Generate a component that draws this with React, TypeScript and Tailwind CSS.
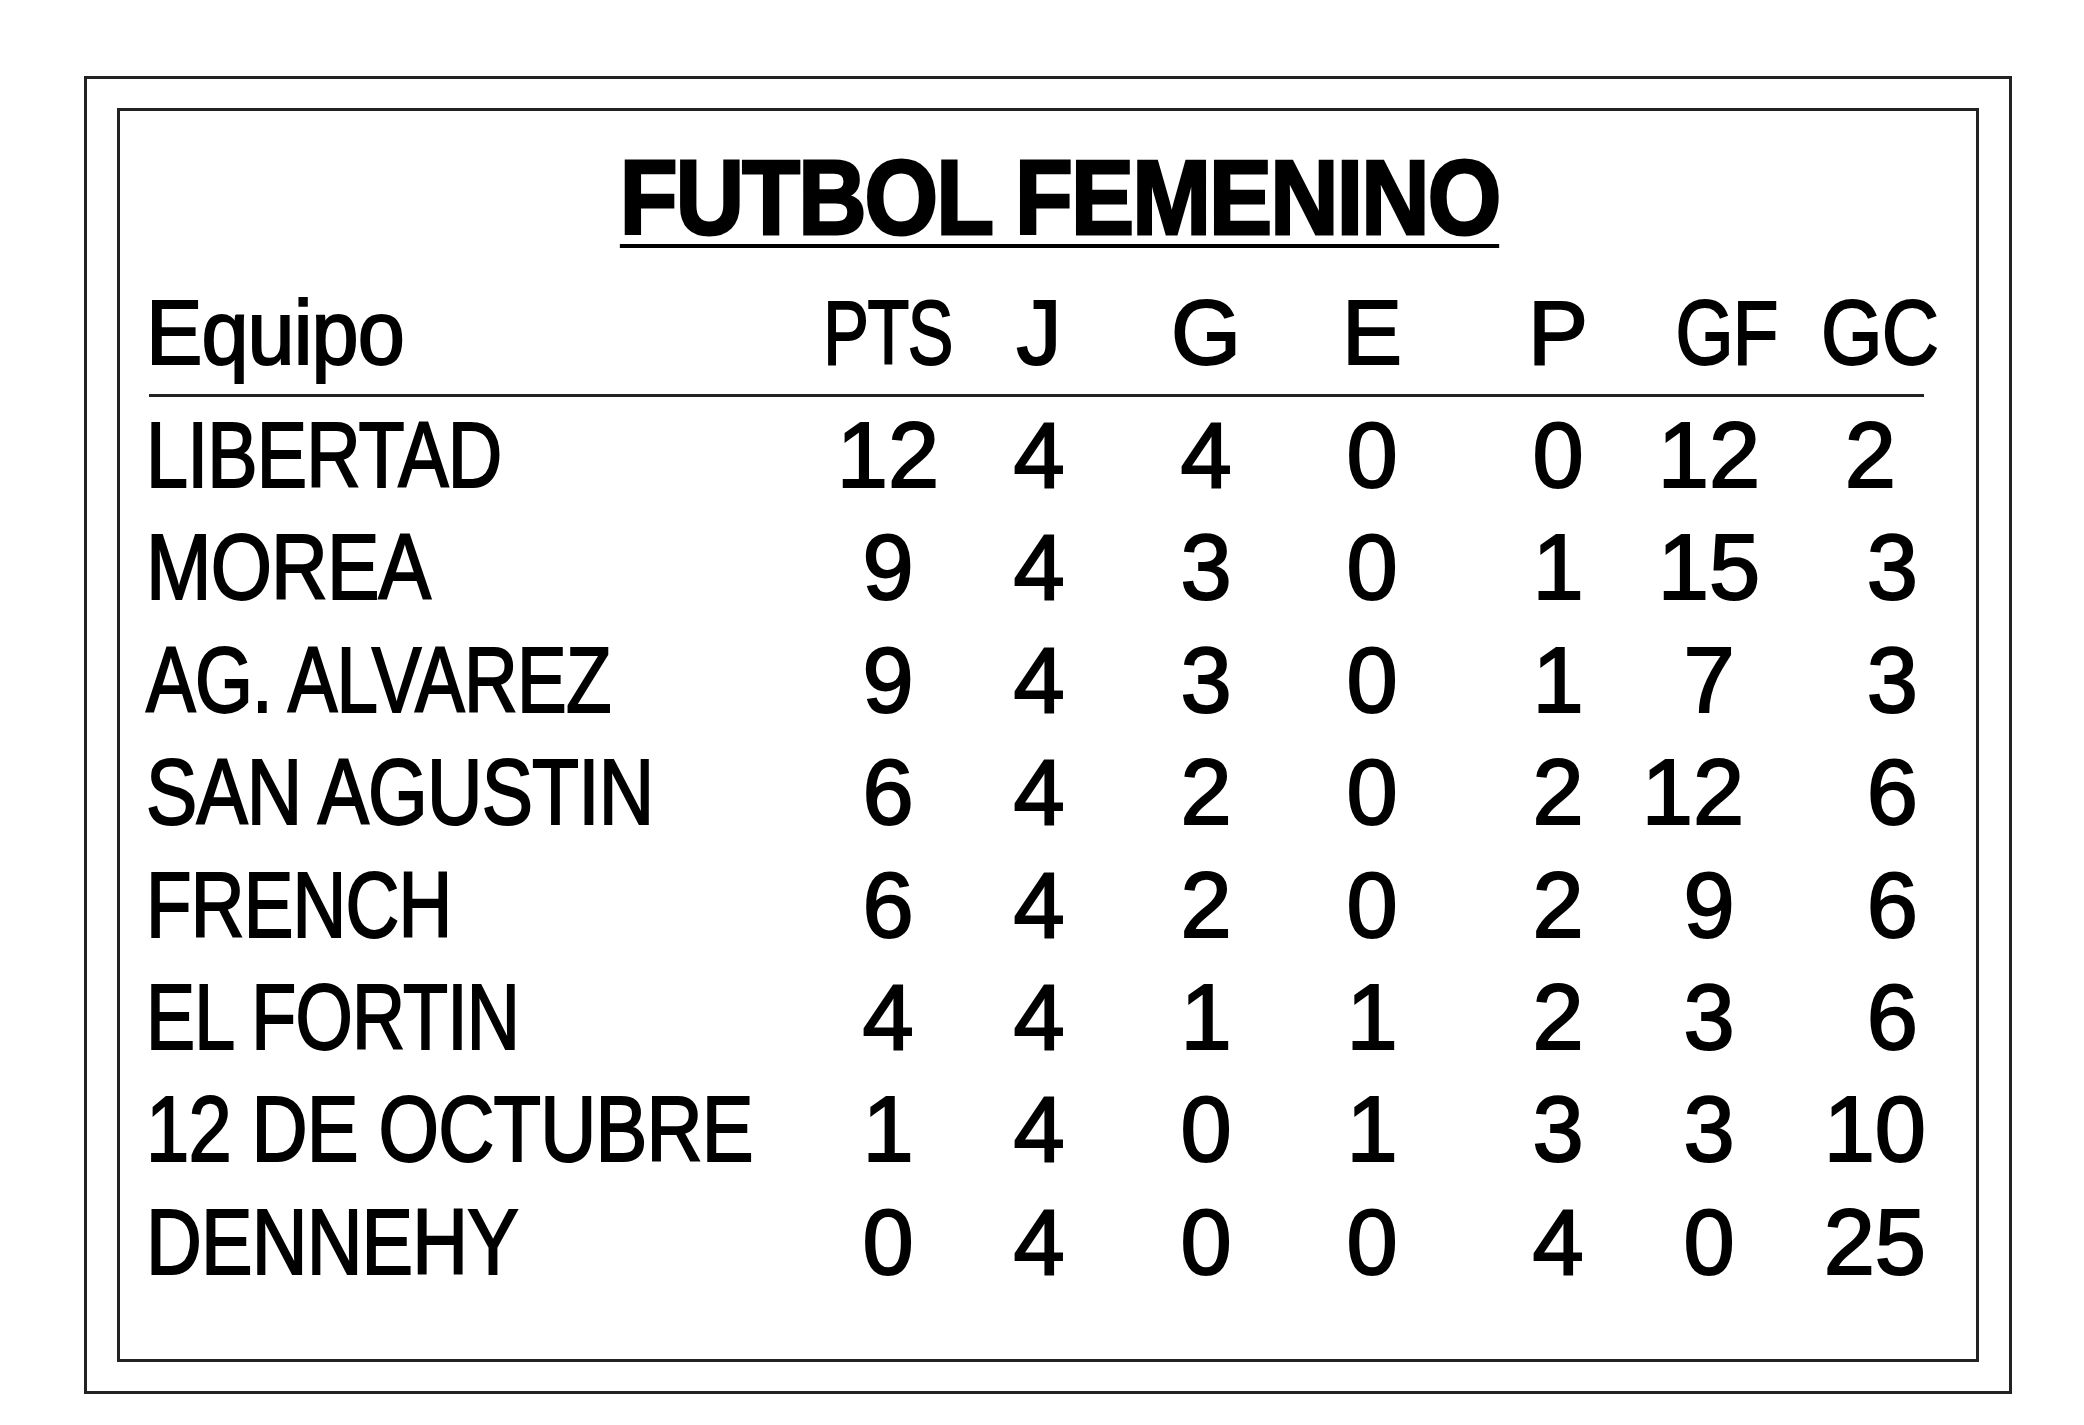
import React from "react";

type Row = {
  name: string;
  sc: string;
  v: string[];
  gfCls?: string;
  gcCls?: string;
};

const rows: Row[] = [
  { name: "LIBERTAD", sc: "scale-x-[0.82]", v: ["12", "4", "4", "0", "0", "12", "2"], gcCls: "mr-[22px]" },
  { name: "MOREA", sc: "scale-x-[0.855]", v: ["9", "4", "3", "0", "1", "15", "3"] },
  { name: "AG. ALVAREZ", sc: "scale-x-[0.81]", v: ["9", "4", "3", "0", "1", "7", "3"] },
  { name: "SAN AGUSTIN", sc: "scale-x-[0.835]", v: ["6", "4", "2", "0", "2", "12", "6"], gfCls: "mr-[32px]" },
  { name: "FRENCH", sc: "scale-x-[0.81]", v: ["6", "4", "2", "0", "2", "9", "6"] },
  { name: "EL FORTIN", sc: "scale-x-[0.80]", v: ["4", "4", "1", "1", "2", "3", "6"] },
  { name: "12 DE OCTUBRE", sc: "scale-x-[0.845]", v: ["1", "4", "0", "1", "3", "3", "10"], gcCls: "mr-[-8px]" },
  { name: "DENNEHY", sc: "scale-x-[0.84]", v: ["0", "4", "0", "0", "4", "0", "25"], gcCls: "mr-[-8px]" },
];

const grid =
  "grid grid-cols-[672px_140px_162px_172px_160px_212px_90px_164px] w-[1772px]";

export default function App() {
  return (
    <div className="w-[2084px] h-[1425px] bg-white overflow-hidden">
      <div className="ml-[84px] mt-[76px] w-[1928px] h-[1318px] border-[3px] border-[#222] px-[30px] py-[29px]">
        <div className="w-full h-full border-[3px] border-[#222] flex flex-col text-black font-['Liberation_Sans',sans-serif]">
          <div className="flex justify-center pl-[24px] pt-[40px]">
            <div className="scale-x-[0.9] border-b-[4px] border-black text-[105px] leading-[93px] font-bold tracking-[-2px] [-webkit-text-stroke:3px_black] whitespace-nowrap">
              FUTBOL FEMENINO
            </div>
          </div>
          <div className="pl-[26px] mt-[35px]">
            <div className={`${grid} text-[90px] leading-[100px] [-webkit-text-stroke:2px_black]`}>
              <div className="whitespace-nowrap">
                <span className="inline-block origin-left scale-x-[0.94] tracking-[-1px]">Equipo</span>
              </div>
              <div className="flex justify-center">
                <span className="inline-block scale-x-[0.76] tracking-[-2px]">PTS</span>
              </div>
              <div className="flex justify-center">
                <span>J</span>
              </div>
              <div className="flex justify-center">
                <span>G</span>
              </div>
              <div className="flex justify-center">
                <span>E</span>
              </div>
              <div className="flex justify-center">
                <span>P</span>
              </div>
              <div className="flex justify-center whitespace-nowrap">
                <span className="inline-block ml-[34px] scale-x-[0.83] tracking-[-1px]">GF</span>
              </div>
              <div className="flex justify-end whitespace-nowrap">
                <span className="inline-block mr-[-20px] origin-right scale-x-[0.88] tracking-[-1px]">GC</span>
              </div>
            </div>
            <div className="ml-[3px] mt-[11px] w-[1775px] h-[3px] bg-[#222]" />
            <div className="mt-[2px]">
              {rows.map((r) => (
                <div
                  key={r.name}
                  className={`${grid} h-[112.4px] text-[92px] leading-[112.4px] [-webkit-text-stroke:2px_black]`}
                >
                  <div className="whitespace-nowrap">
                    <span className={`inline-block origin-left tracking-[-1px] ${r.sc}`}>{r.name}</span>
                  </div>
                  {r.v.slice(0, 5).map((n, i) => (
                    <div key={i} className="flex justify-center">
                      <span>{n}</span>
                    </div>
                  ))}
                  <div className="flex justify-center whitespace-nowrap">
                    <span className={r.gfCls ?? ""}>{r.v[5]}</span>
                  </div>
                  <div className="flex justify-end whitespace-nowrap">
                    <span className={r.gcCls ?? ""}>{r.v[6]}</span>
                  </div>
                </div>
              ))}
            </div>
          </div>
        </div>
      </div>
    </div>
  );
}
